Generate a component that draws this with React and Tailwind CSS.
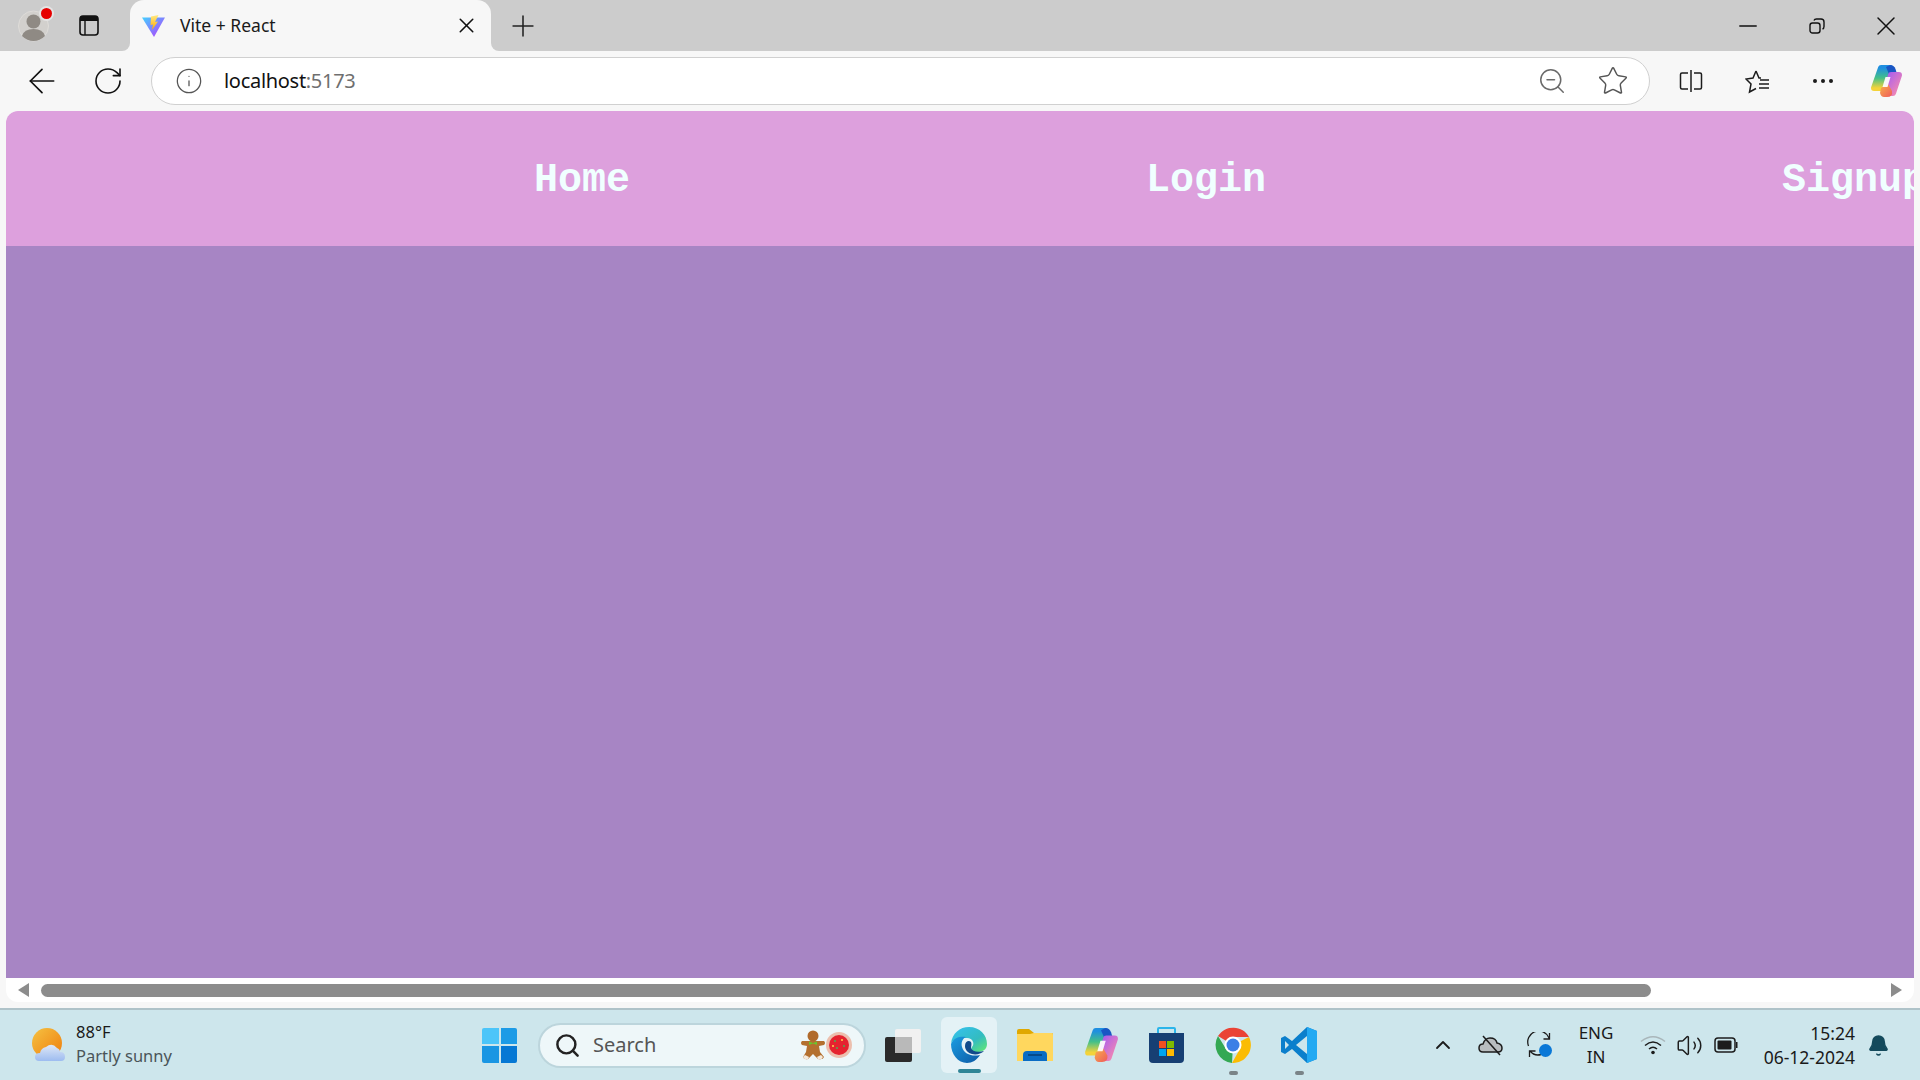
import React from 'react';
import { ArrowLeft, RotateCw, Info, ZoomOut, Star, X, Plus, Minus, ChevronUp, Volume2, Bell, Search } from 'lucide-react';

const ViteLogo = () => (
  <svg width="24" height="24" viewBox="0 0 24 24" className="shrink-0">
    <defs>
      <linearGradient id="viteA" x1="0" y1="0" x2="1" y2="1">
        <stop offset="0" stopColor="#41d1ff" />
        <stop offset="1" stopColor="#bd34fe" />
      </linearGradient>
      <linearGradient id="viteB" x1="0" y1="0" x2="0" y2="1">
        <stop offset="0" stopColor="#ffea83" />
        <stop offset="1" stopColor="#ffa800" />
      </linearGradient>
    </defs>
    <path d="M0 3.5 L23 3.5 L12 23 Z" fill="url(#viteA)" />
    <path d="M16.5 1 L9 2.5 L8.5 11 L11 10.5 L10 16 L16 7.5 L13 8 Z" fill="url(#viteB)" />
  </svg>
);

const CopilotLogo = ({ size = 34, id = 'a' }) => (
  <svg width={size} height={size} viewBox="0 0 34 34" className="shrink-0">
    <defs>
      <linearGradient id={`copA${id}`} x1="0" y1="0" x2="0" y2="1">
        <stop offset="0" stopColor="#1f8fe0" />
        <stop offset="0.5" stopColor="#44c088" />
        <stop offset="1" stopColor="#f4d33a" />
      </linearGradient>
      <linearGradient id={`copB${id}`} x1="0" y1="0" x2="1" y2="1">
        <stop offset="0" stopColor="#a85cf0" />
        <stop offset="1" stopColor="#f58ab0" />
      </linearGradient>
      <linearGradient id={`copC${id}`} x1="0" y1="0" x2="1" y2="1">
        <stop offset="0" stopColor="#f8b24a" />
        <stop offset="1" stopColor="#ef5b5b" />
      </linearGradient>
    </defs>
    <path d="M12 4 L21 4 L14 24 L5 24 Z" fill={`url(#copA${id})`} stroke={`url(#copA${id})`} strokeWidth="6" strokeLinejoin="round" />
    <path d="M21 1 Q25 1 26.5 5 L28 10 L20 10 L17 3 Z" fill="#1a56c4" />
    <path d="M22 11 L30 11 L24 29 L17 29 Z" fill={`url(#copB${id})`} stroke={`url(#copB${id})`} strokeWidth="6" strokeLinejoin="round" />
    <path d="M12 24 L19 20 L23 27 Q24 33 18 33 L15 33 Q12 33 11 29 Z" fill={`url(#copC${id})`} />
    <path d="M16.5 13 L21.5 13 L18.5 23 L13.5 23 Z" fill="#ffffff" opacity="0.92" />
  </svg>
);

const WindowsLogo = () => (
  <div className="grid grid-cols-2 gap-[2px] w-[35px] h-[35px] shrink-0">
    <div className="rounded-tl-[2px] bg-[#4cc5f9]" />
    <div className="rounded-tr-[2px] bg-[#1d9be6]" />
    <div className="rounded-bl-[2px] bg-[#1a96e3]" />
    <div className="rounded-br-[2px] bg-[#0678d4]" />
  </div>
);

const WeatherIcon = () => (
  <svg width="34" height="34" viewBox="0 0 34 34" className="shrink-0">
    <defs>
      <linearGradient id="sun" x1="0" y1="0" x2="1" y2="1">
        <stop offset="0" stopColor="#f5c242" />
        <stop offset="1" stopColor="#ef7d0d" />
      </linearGradient>
      <linearGradient id="cloud" x1="0" y1="0" x2="0" y2="1">
        <stop offset="0" stopColor="#dfe8f7" />
        <stop offset="1" stopColor="#9dbcf0" />
      </linearGradient>
    </defs>
    <circle cx="15" cy="15" r="15" fill="url(#sun)" />
    <path d="M7 33 Q3 33 3 29 Q3 25 8 25 Q9 20 14 19 Q20 14 25 20 Q28 21 28 24 Q33 24 33 29 Q33 33 29 33 Z" fill="url(#cloud)" />
  </svg>
);

const Gingerbread = () => (
  <svg width="26" height="31" viewBox="0 0 26 31" className="shrink-0">
    <circle cx="13" cy="6" r="5.5" fill="#b06a2b" />
    <path d="M9 11 L2 11 Q0 13 2 15 L7 16 L6 22 L3 27 Q4 30 8 29 L13 24 L18 29 Q23 30 24 27 L20 22 L19 16 L24 15 Q26 13 24 11 L17 11 Z" fill="#b4702f" />
    <path d="M9 11.5 L13 13 L17 11.5 L17 15 L13 13.5 L9 15 Z" fill="#6cc22f" />
    <path d="M3 27 Q4 30 8 29 L9 27 L5 25 Z M23 27 Q22 30 18 29 L17 27 L21 25 Z" fill="#f3e9dc" />
  </svg>
);

const RedBall = () => (
  <svg width="26" height="26" viewBox="0 0 26 26" className="shrink-0">
    <circle cx="13" cy="13" r="13" fill="#ecbfae" />
    <circle cx="13" cy="13" r="10" fill="#e5232f" />
    <circle cx="9" cy="9" r="1" fill="#4caf50" />
    <circle cx="16" cy="8" r="1" fill="#ffd54f" />
    <circle cx="18" cy="14" r="1" fill="#4caf50" />
    <circle cx="11" cy="16" r="1" fill="#4caf50" />
    <circle cx="7" cy="14" r="1" fill="#ffd54f" />
  </svg>
);

const TaskView = () => (
  <svg width="36" height="36" viewBox="0 0 36 36" className="shrink-0">
    <rect x="10" y="2" width="26" height="24" rx="2" fill="#f1f1f1" />
    <rect x="0" y="10" width="27" height="25" rx="2" fill="#2a2a2a" />
    <path d="M10 10 H27 V26 H10 Z" fill="#b9b9b9" />
  </svg>
);

const EdgeLogo = () => (
  <svg width="36" height="36" viewBox="0 0 36 36" className="shrink-0">
    <defs>
      <linearGradient id="edgeA" x1="0" y1="0" x2="1" y2="1">
        <stop offset="0" stopColor="#35c1f1" />
        <stop offset="0.6" stopColor="#33bcc0" />
        <stop offset="1" stopColor="#66eb6e" />
      </linearGradient>
      <linearGradient id="edgeB" x1="0" y1="0" x2="1" y2="1">
        <stop offset="0" stopColor="#1b9de2" />
        <stop offset="1" stopColor="#0c59a4" />
      </linearGradient>
    </defs>
    <path d="M0 17 C1 6 9 0 18 0 C29 0 36 8 36 17 C36 23 31 25 26 25 C22 25 19 23 21 20 C24 17 22 11 16 11 C8 11 2 12 0 17 Z" fill="url(#edgeA)" />
    <path d="M0 17 C3 10 10 9 15 10 C11 12 10 16 11 20 C13 27 21 30 29 28 C26 33 21 36 16 36 C7 36 0 27 0 17 Z" fill="url(#edgeB)" />
    <path d="M14 19 C14 14 18 13 20 15 C21 17 20 19 20 21 C21 24 26 26 33 24 C30 27 25 28 21 27 C17 26 14 23 14 19 Z" fill="#114a8b" />
  </svg>
);

const FolderIcon = () => (
  <svg width="36" height="32" viewBox="0 0 36 32" className="shrink-0">
    <path d="M0 2 Q0 0 2 0 H12 L17 4 H35 Q36 4 36 6 V10 H0 Z" fill="#e0a800" />
    <path d="M0 5 H13 L17 4 H35 Q36 4 36 6 V32 H0 Z" fill="#ffd75e" />
    <path d="M6 32 V26 Q6 22 10 22 H26 Q30 22 30 26 V32 Z" fill="#0a6cc4" />
    <rect x="11" y="25" width="14" height="2" fill="#064a8a" />
  </svg>
);

const StoreIcon = () => (
  <svg width="35" height="36" viewBox="0 0 35 36" className="shrink-0">
    <path d="M9 8 V2 Q9 1 10 1 H25 Q26 1 26 2 V8" fill="none" stroke="#2bb5ea" strokeWidth="2" />
    <path d="M0 6 H35 V32 Q35 36 31 36 H4 Q0 36 0 32 Z" fill="#173f73" />
    <rect x="10" y="14" width="7" height="7" fill="#f25022" />
    <rect x="18" y="14" width="7" height="7" fill="#7fba00" />
    <rect x="10" y="22" width="7" height="7" fill="#00a4ef" />
    <rect x="18" y="22" width="7" height="7" fill="#ffb900" />
  </svg>
);

const ChromeIcon = () => (
  <svg width="36" height="36" viewBox="0 0 36 36" className="shrink-0">
    <path d="M18 18 L3 9 A18 18 0 0 1 34 10 L18 10 Z" fill="#ea4335" />
    <path d="M18 18 L34 10 A18 18 0 0 1 17 36 L26 20 Z" fill="#fbbc04" />
    <path d="M18 18 L17 36 A18 18 0 0 1 3 9 L11 22 Z" fill="#34a853" />
    <circle cx="18" cy="18" r="8.5" fill="#ffffff" />
    <circle cx="18" cy="18" r="6.5" fill="#3c7fe6" />
  </svg>
);

const VsCodeIcon = () => (
  <svg width="36" height="36" viewBox="0 0 36 36" className="shrink-0">
    <path d="M26 0 L36 4 V32 L26 36 L11 22 L4 27 L0 25 V11 L4 9 L11 14 Z" fill="#0b7fcc" />
    <path d="M26 0 L36 4 V32 L26 36 Z" fill="#23a9f2" />
    <path d="M26 9 L15 18 L26 27 Z" fill="#cde6ec" />
    <path d="M4 14 L8 18 L4 22 Z" fill="#cde6ec" />
  </svg>
);

const SplitIcon = () => (
  <svg width="24" height="24" viewBox="0 0 24 24" fill="none" stroke="#1c1c1c" strokeWidth="1.5" className="shrink-0">
    <path d="M9 4 H3 Q1.5 4 1.5 5.5 V18.5 Q1.5 20 3 20 H9" />
    <path d="M15 4 H21 Q22.5 4 22.5 5.5 V18.5 Q22.5 20 21 20 H15" />
    <path d="M12 1 V23" />
  </svg>
);

const FavoritesIcon = () => (
  <svg width="25" height="25" viewBox="0 0 25 25" fill="none" stroke="#1c1c1c" strokeWidth="1.5" className="shrink-0">
    <path d="M11 2 L14 9 H16 M11 2 L8 9 L1 10 L6 15 L4.5 23 L11 19.5" />
    <path d="M15 11 H24 M14 15 H24 M14 19 H24" />
  </svg>
);

const PanelIcon = () => (
  <svg width="20" height="21" viewBox="0 0 20 21" className="shrink-0">
    <rect x="1" y="1" width="18" height="19" rx="3" fill="none" stroke="#111" strokeWidth="1.6" />
    <path d="M1 4 Q1 1 4 1 H16 Q19 1 19 4 V6 H1 Z" fill="#111" />
    <path d="M6 6 V20" stroke="#111" strokeWidth="1.4" />
  </svg>
);

const Avatar = () => (
  <div className="relative w-[31px] h-[33px] shrink-0">
    <svg width="31" height="33" viewBox="0 0 31 33">
      <circle cx="15.5" cy="17" r="15" fill="#d2d0cd" stroke="#dedcd9" />
      <circle cx="15.5" cy="12.5" r="7" fill="#8f8a84" />
      <path d="M4 27 Q6 20 15.5 20 Q25 20 27 27 Q22 32 15.5 32 Q9 32 4 27 Z" fill="#8f8a84" />
    </svg>
    <div className="absolute right-[-3px] top-[-1px] w-[11px] h-[11px] rounded-full bg-[#e60000] ring-2 ring-[#e4e4e4]" />
  </div>
);

const RestoreIcon = () => (
  <svg width="16" height="16" viewBox="0 0 16 16" fill="none" stroke="#111" strokeWidth="1.4" className="shrink-0">
    <rect x="1" y="5" width="10" height="10" rx="2.5" />
    <path d="M5 2.5 Q5.5 1 7.5 1 H12 Q15 1 15 4 V8.5 Q15 10.5 13.5 11" />
  </svg>
);

const CloudOff = () => (
  <svg width="25" height="22" viewBox="0 0 25 22" fill="none" className="shrink-0">
    <path d="M5 18 Q1 18 1 14 Q1 10 5 10 Q7 4 12 4 Q18 4 19 9 Q24 10 24 14 Q24 18 20 18 Z" fill="#b8bdbf" stroke="#1c1c1c" strokeWidth="1.5" />
    <path d="M5 2 L22 21" stroke="#1c1c1c" strokeWidth="1.5" />
  </svg>
);

const SyncDot = () => (
  <div className="relative w-[25px] h-[26px] shrink-0">
    <svg width="25" height="26" viewBox="0 0 25 26" fill="none" stroke="#1c1c1c" strokeWidth="1.3">
      <path d="M1.5 14 A10.5 10.5 0 0 1 22 6 M22.5 1 V7 H16.5" />
      <path d="M14 22.5 A10.5 10.5 0 0 1 3 19 M2.5 25 V19 H8.5" />
    </svg>
    <div className="absolute right-0 bottom-[1px] w-[13px] h-[13px] rounded-full bg-[#0a78d7]" />
  </div>
);

const WifiIcon = () => (
  <svg width="26" height="20" viewBox="0 0 26 20" fill="none" strokeWidth="1.5" className="shrink-0">
    <path d="M1 6.5 Q13 -3 25 6.5" stroke="#a9b6ba" />
    <path d="M5 10.5 Q13 3.5 21 10.5" stroke="#1c1c1c" />
    <path d="M9 14 Q13 10.5 17 14" stroke="#1c1c1c" />
    <circle cx="13" cy="17.5" r="1.8" fill="#1c1c1c" />
  </svg>
);

const BatteryIcon = () => (
  <svg width="24" height="16" viewBox="0 0 24 16" fill="none" className="shrink-0">
    <rect x="1" y="1" width="20" height="14" rx="3" stroke="#1c1c1c" strokeWidth="1.5" />
    <rect x="3.5" y="3.5" width="14" height="9" rx="1" fill="#1c1c1c" />
    <path d="M22 5 H23.5 V11 H22 Z" fill="#1c1c1c" />
  </svg>
);

const App = () => {
  return (
    <div className="w-[1920px] h-[1080px] flex flex-col overflow-hidden bg-[#f7f7f7] font-['Noto_Sans','Open_Sans',sans-serif]">
      {/* Tab strip */}
      <div className="h-[51px] shrink-0 flex items-center bg-[#cccccc]">
        <div className="pl-[18px] w-[79px] shrink-0"><Avatar /></div>
        <PanelIcon />
        <div className="relative ml-[31px] w-[361px] h-[51px] flex items-center bg-[#f7f7f7] rounded-t-[14px] pl-[12px] pr-[12px] shrink-0">
          {/* bottom flares of the active tab */}
          <div className="absolute left-[-8px] bottom-0 w-[8px] h-[8px] bg-[#f7f7f7]">
            <div className="w-full h-full bg-[#cccccc] rounded-br-[8px]" />
          </div>
          <div className="absolute right-[-8px] bottom-0 w-[8px] h-[8px] bg-[#f7f7f7]">
            <div className="w-full h-full bg-[#cccccc] rounded-bl-[8px]" />
          </div>
          <ViteLogo />
          <span className="ml-[14px] text-[17.5px] text-[#1a1a1a] whitespace-nowrap">Vite + React</span>
          <X size={25} strokeWidth={1.5} className="ml-auto text-[#111]" />
        </div>
        <Plus size={34} strokeWidth={1.1} className="ml-[15px] text-[#222]" />
        <div className="ml-auto flex items-center">
          <div className="w-[69px] flex justify-center"><Minus size={28} strokeWidth={1.3} className="text-[#111]" /></div>
          <div className="w-[69px] flex justify-center"><RestoreIcon /></div>
          <div className="w-[69px] flex justify-center"><X size={32} strokeWidth={1.1} className="text-[#111]" /></div>
        </div>
      </div>

      {/* Toolbar */}
      <div className="h-[60px] shrink-0 flex items-center">
        <ArrowLeft size={40} strokeWidth={1} className="ml-[22px] text-[#111]" />
        <RotateCw size={32} strokeWidth={1.2} className="ml-[30px] text-[#111]" />
        <div className="ml-[27px] w-[1499px] h-[48px] flex items-center rounded-full bg-white border border-[#d0d0d0] pl-[23px] pr-[20px] shrink-0">
          <Info size={28} strokeWidth={1.1} className="text-[#555]" />
          <span className="ml-[21px] text-[20px] tracking-[-0.3px] text-[#111]">localhost<span className="text-[#6f6f6f]">:5173</span></span>
          <ZoomOut size={30} strokeWidth={1.2} className="ml-auto text-[#6a6a6a]" />
          <Star size={32} strokeWidth={1.1} className="ml-[30px] text-[#555]" />
        </div>
        <div className="ml-[29px]"><SplitIcon /></div>
        <div className="ml-[42px]"><FavoritesIcon /></div>
        <div className="ml-[43px] flex gap-[4px]">
          <div className="w-[4px] h-[4px] rounded-full bg-[#1c1c1c]" />
          <div className="w-[4px] h-[4px] rounded-full bg-[#1c1c1c]" />
          <div className="w-[4px] h-[4px] rounded-full bg-[#1c1c1c]" />
        </div>
        <div className="ml-[36px]"><CopilotLogo id="t" /></div>
      </div>

      {/* Page viewport */}
      <div className="mx-[6px] flex-1 min-h-0 flex flex-col bg-white rounded-[12px] overflow-hidden">
        <nav className="h-[135px] shrink-0 flex items-center gap-[516px] pl-[528px] pt-[5px] bg-[#dda0dd] overflow-hidden">
          <a className="shrink-0 text-[40px] font-bold text-[#f0ffff] font-['Liberation_Mono',monospace]">Home</a>
          <a className="shrink-0 text-[40px] font-bold text-[#f0ffff] font-['Liberation_Mono',monospace]">Login</a>
          <a className="shrink-0 text-[40px] font-bold text-[#f0ffff] font-['Liberation_Mono',monospace]">Signup</a>
        </nav>
        <main className="flex-1 bg-[#a785c4]" />
        <div className="h-[24px] shrink-0 flex items-center">
          <div className="ml-[12px] w-0 h-0 border-y-[7px] border-y-transparent border-r-[11px] border-r-[#8c8c8c]" />
          <div className="ml-[12px] w-[1610px] h-[13px] rounded-full bg-[#8c8c8c]" />
          <div className="ml-auto mr-[12px] w-0 h-0 border-y-[7px] border-y-transparent border-l-[11px] border-l-[#8c8c8c]" />
        </div>
      </div>

      {/* Taskbar */}
      <div className="mt-[6px] h-[72px] shrink-0 flex items-center bg-[#cde6ec] border-t-2 border-[#afc3c9] text-[#1a1a1a]">
        <div className="ml-[32px] w-[450px] shrink-0 flex items-center">
          <WeatherIcon />
          <div className="ml-[10px] -mt-[2px] flex flex-col leading-[24px]">
            <span className="text-[16.5px]">88°F</span>
            <span className="text-[16.5px] text-[#4a5559]">Partly sunny</span>
          </div>
        </div>
        <WindowsLogo />
        <div className="ml-[21px] w-[328px] h-[45px] shrink-0 flex items-center rounded-full bg-[#eef7f9] border-2 border-[#bcd5dc] pl-[14px] pr-[12px]">
          <Search size={27} strokeWidth={2.2} className="text-[#222]" />
          <span className="ml-[12px] text-[20px] text-[#555]">Search</span>
          <div className="ml-auto flex items-center"><Gingerbread /><RedBall /></div>
        </div>
        <div className="ml-[19px]"><TaskView /></div>
        <div className="ml-[20px] w-[56px] h-[56px] shrink-0 flex items-center justify-center rounded-[6px] bg-[#e4f2f6] relative">
          <EdgeLogo />
          <div className="absolute bottom-[0px] left-[17px] w-[23px] h-[4px] rounded-full bg-[#2f8596]" />
        </div>
        <div className="ml-[20px]"><FolderIcon /></div>
        <div className="ml-[30px]"><CopilotLogo size={36} id="b" /></div>
        <div className="ml-[30px]"><StoreIcon /></div>
        <div className="ml-[31px] relative">
          <ChromeIcon />
          <div className="absolute bottom-[-12px] left-[14px] w-[9px] h-[4px] rounded-full bg-[#7a8488]" />
        </div>
        <div className="ml-[30px] relative">
          <VsCodeIcon />
          <div className="absolute bottom-[-12px] left-[14px] w-[9px] h-[4px] rounded-full bg-[#7a8488]" />
        </div>
        <ChevronUp size={24} strokeWidth={1.8} className="ml-[114px] text-[#1c1c1c]" />
        <div className="ml-[23px]"><CloudOff /></div>
        <div className="ml-[24px]"><SyncDot /></div>
        <div className="ml-[24px] w-[40px] flex flex-col items-center text-[17px] leading-[24px]">
          <span>ENG</span>
          <span>IN</span>
        </div>
        <div className="ml-[24px]"><WifiIcon /></div>
        <Volume2 size={27} strokeWidth={1.3} className="ml-[10px] text-[#1c1c1c]" />
        <div className="ml-[11px]"><BatteryIcon /></div>
        <div className="ml-[19px] w-[98px] shrink-0 flex flex-col items-end text-[17.5px] leading-[24px] whitespace-nowrap">
          <span>15:24</span>
          <span>06-12-2024</span>
        </div>
        <Bell size={23} fill="#144a5c" strokeWidth={1.5} className="ml-[12px] text-[#144a5c]" />
      </div>
    </div>
  );
};

export default App;
